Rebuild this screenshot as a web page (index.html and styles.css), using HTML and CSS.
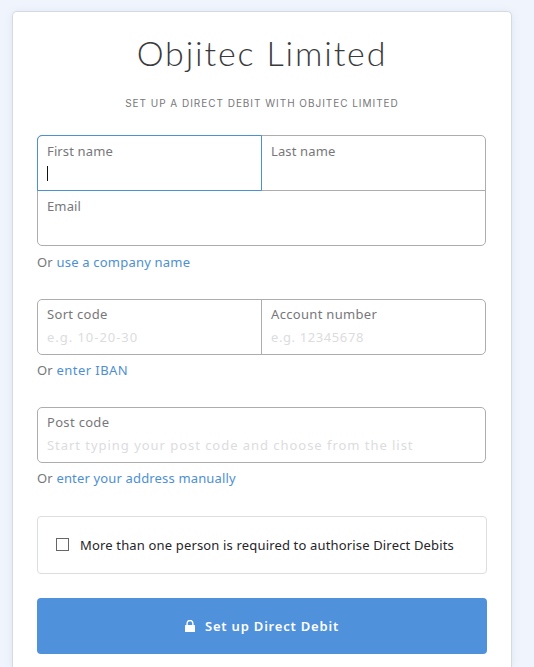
FILE: index.html
```
<!DOCTYPE html>
<html lang="en">
<head>
<meta charset="utf-8">
<title>Set up a Direct Debit</title>
<link rel="stylesheet" href="styles.css">
</head>
<body>
<main class="card">
  <h1 class="title">Objitec Limited</h1>
  <p class="subtitle">Set up a Direct Debit with Objitec Limited</p>
  <section class="group group-name">
    <div class="fields">
      <div class="field focused"><span class="label">First name</span><span class="caret"></span></div>
      <div class="field right"><span class="label">Last name</span></div>
      <div class="field wide below"><span class="label">Email</span></div>
    </div>
    <p class="alt">Or <a>use a company name</a></p>
  </section>
  <section class="group group-bank">
    <div class="fields">
      <div class="field"><span class="label">Sort code</span><span class="hint">e.g. 10-20-30</span></div>
      <div class="field right"><span class="label">Account number</span><span class="hint hint-number">e.g. 12345678</span></div>
    </div>
    <p class="alt">Or <a class="iban">enter IBAN</a></p>
  </section>
  <section class="group group-address">
    <div class="fields">
      <div class="field wide"><span class="label">Post code</span><span class="hint">Start typing your post code and choose from the list</span></div>
    </div>
    <p class="alt">Or <a>enter your address manually</a></p>
  </section>
  <div class="confirm"><span class="box"></span><span class="confirm-text">More than one person is required to authorise Direct Debits</span></div>
  <div class="submit">
    <svg class="lock" width="10" height="12" viewBox="0 0 10 12"><path d="M2.1 5.5V3.4a2.9 2.9 0 0 1 5.8 0v2.1" fill="none" stroke="#fff" stroke-width="1.4"/><rect y="5" width="10" height="7" rx=".6" fill="#fff"/></svg>
    <span>Set up Direct Debit</span>
  </div>
</main>
</body>
</html>
```
FILE: styles.css
```
* { box-sizing: border-box; }
body {
  margin: 0;
  height: 667px;
  overflow: hidden;
  background: #f0f5fd;
  font-family: "Noto Sans", "Liberation Sans", sans-serif;
  font-size: 13px;
  color: #77777b;
}
.card {
  width: 500px;
  height: 656px;
  margin: 11px 0 0 12px;
  padding: 24px;
  background: #fff;
  border: 1px solid #d6dae0;
  border-bottom: 0;
  border-radius: 5px 5px 0 0;
  box-shadow: 0 1px 8px rgba(60, 80, 120, .1);
}
.title {
  margin: 0;
  height: 36px;
  line-height: 34px;
  text-align: center;
  font-family: Lato, Inter, sans-serif;
  font-size: 34px;
  font-weight: 300;
  letter-spacing: 1.85px;
  color: #3a3a3c;
  white-space: nowrap;
}
.subtitle {
  margin: 24px 0 0;
  height: 16px;
  line-height: 15px;
  text-align: center;
  text-transform: uppercase;
  font-family: Inter, sans-serif;
  font-size: 10px;
  letter-spacing: .97px;
  white-space: nowrap;
}
.group { height: 108px; }
.group-name { height: 164px; margin-top: 23px; }
.fields {
  display: grid;
  grid-template-columns: 223px 224px;
  width: 449px;
  border: 1px solid #adadad;
  border-radius: 5px;
}
.field {
  position: relative;
  height: 54px;
  padding: 7px 9px 0;
  white-space: nowrap;
}
.right { border-left: 1px solid #adadad; }
.wide { grid-column: 1 / -1; }
.below { height: 55px; border-top: 1px solid #adadad; }
.focused::after {
  content: "";
  position: absolute;
  inset: -1px;
  border: 1px solid #4b92d4;
  border-radius: 5px 0 0 0;
  z-index: 1;
}
.label { display: block; line-height: 16px; letter-spacing: .13px; }
.group-bank .label, .group-address .label { line-height: 15px; letter-spacing: .32px; }
.hint { display: block; margin-top: 7px; line-height: 16px; color: #dcdcde; letter-spacing: .96px; }
.hint-number { letter-spacing: .6px; }
.caret { display: block; width: 1px; height: 15px; margin-top: 7px; background: #111; }
.alt { margin: 8px 0 0; line-height: 17px; letter-spacing: .2px; white-space: nowrap; }
.group-bank .alt, .group-address .alt { line-height: 15px; }
.group-address .alt { letter-spacing: .16px; }
.alt a { color: #4d90d2; }
.alt .iban { letter-spacing: .45px; }
.confirm {
  display: flex;
  align-items: center;
  width: 450px;
  height: 58px;
  margin-top: 1px;
  padding: 0 0 1px 18px;
  border: 1px solid #dcdde0;
  border-radius: 4px;
  color: #25252b;
  letter-spacing: .16px;
  white-space: nowrap;
}
.box { width: 13px; height: 13px; margin-right: 11px; border: 1px solid #66666a; }
.submit {
  display: flex;
  align-items: center;
  justify-content: center;
  gap: 10px;
  height: 56px;
  margin-top: 24px;
  background: #4f91da;
  border-radius: 4px;
  color: #fff;
  font-weight: 600;
  letter-spacing: .8px;
}
```
